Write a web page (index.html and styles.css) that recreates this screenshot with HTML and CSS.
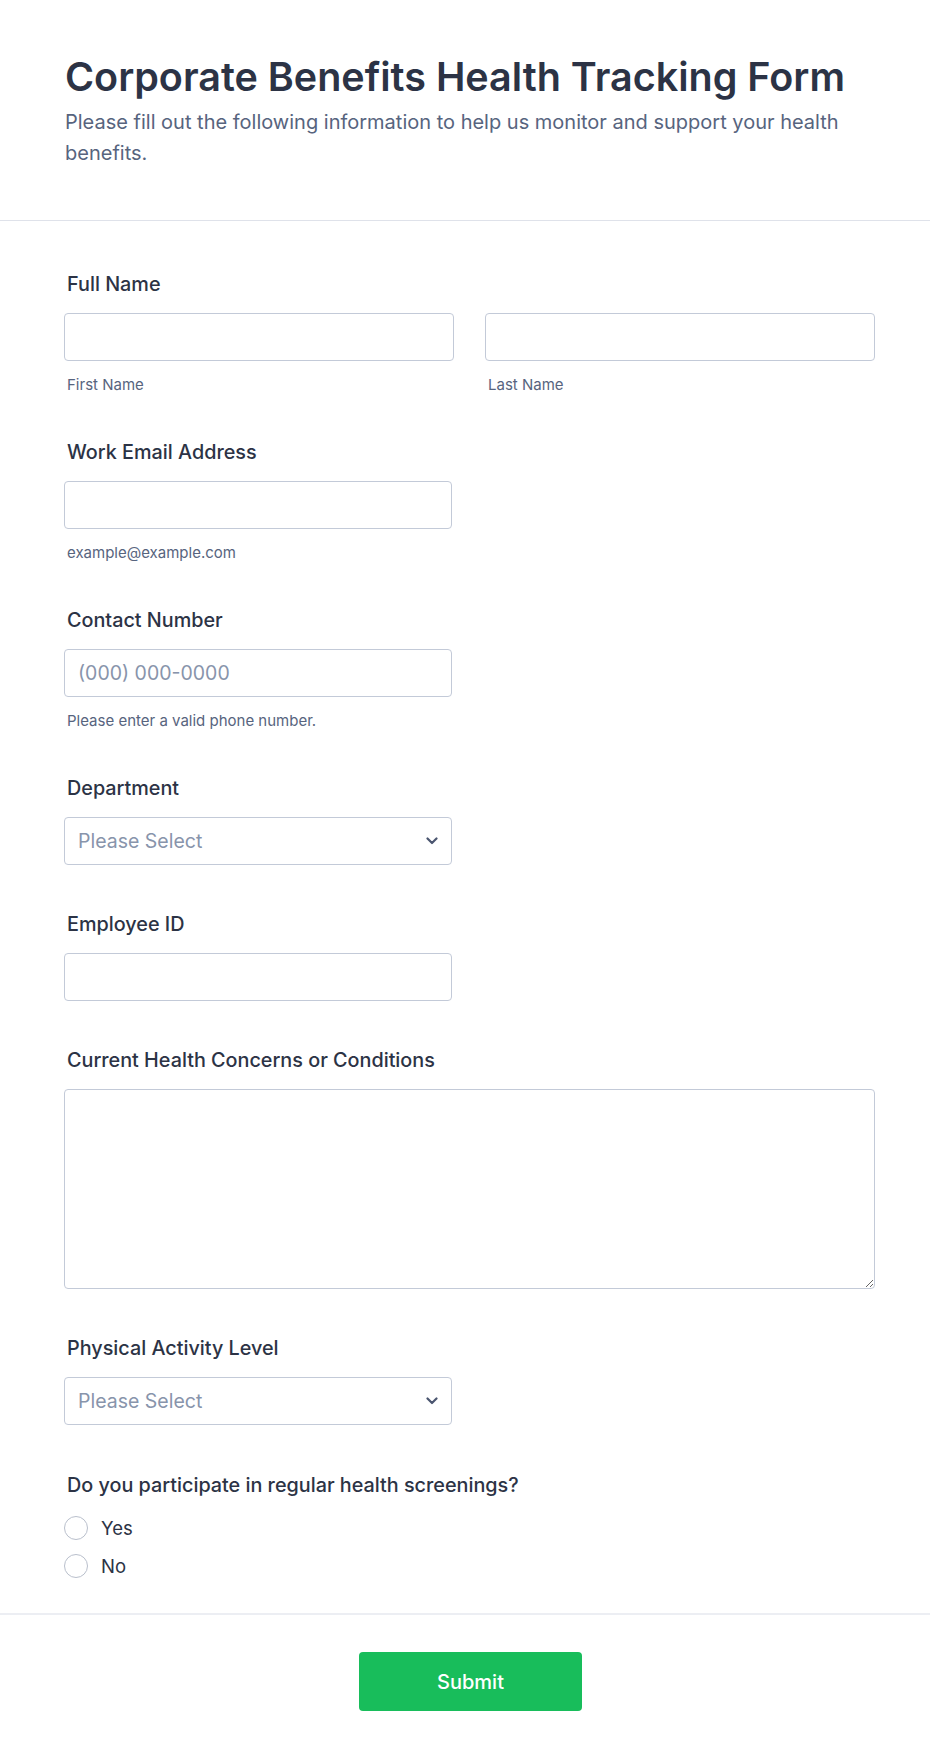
FILE: index.html
```html
<!DOCTYPE html>
<html lang="en">
<head>
<meta charset="utf-8">
<title>Corporate Benefits Health Tracking Form</title>
<link rel="stylesheet" href="styles.css">
</head>
<body>
<form class="form">
  <header class="form-header">
    <h1 class="form-title">Corporate Benefits Health Tracking Form</h1>
    <p class="form-subtitle">Please fill out the following information to help us monitor and support your health benefits.</p>
  </header>

  <div class="form-body">
    <div class="field">
      <label class="field-label">Full Name</label>
      <div class="name-row">
        <div class="name-col">
          <input class="input" type="text">
          <span class="sublabel">First Name</span>
        </div>
        <div class="name-col">
          <input class="input" type="text">
          <span class="sublabel">Last Name</span>
        </div>
      </div>
    </div>

    <div class="field">
      <label class="field-label">Work Email Address</label>
      <input class="input input-half" type="email">
      <span class="sublabel">example@example.com</span>
    </div>

    <div class="field">
      <label class="field-label">Contact Number</label>
      <input class="input input-half" type="tel" placeholder="(000) 000-0000">
      <span class="sublabel">Please enter a valid phone number.</span>
    </div>

    <div class="field">
      <label class="field-label">Department</label>
      <div class="select-wrap">
        <select class="input select">
          <option>Please Select</option>
        </select>
        <svg class="chevron" width="12" height="8" viewBox="0 0 12 8"><path d="M1.5 1.5 L6 6 L10.5 1.5" fill="none" stroke="#4b5670" stroke-width="2.2" stroke-linecap="round" stroke-linejoin="round"/></svg>
      </div>
    </div>

    <div class="field">
      <label class="field-label">Employee ID</label>
      <input class="input input-half" type="text">
    </div>

    <div class="field">
      <label class="field-label">Current Health Concerns or Conditions</label>
      <textarea class="input textarea"></textarea>
    </div>

    <div class="field">
      <label class="field-label">Physical Activity Level</label>
      <div class="select-wrap">
        <select class="input select">
          <option>Please Select</option>
        </select>
        <svg class="chevron" width="12" height="8" viewBox="0 0 12 8"><path d="M1.5 1.5 L6 6 L10.5 1.5" fill="none" stroke="#4b5670" stroke-width="2.2" stroke-linecap="round" stroke-linejoin="round"/></svg>
      </div>
    </div>

    <div class="field field-last">
      <label class="field-label">Do you participate in regular health screenings?</label>
      <div class="radio-list">
        <label class="radio-row"><input class="radio" type="radio" name="screen"><span>Yes</span></label>
        <label class="radio-row"><input class="radio" type="radio" name="screen"><span>No</span></label>
      </div>
    </div>
  </div>

  <footer class="form-footer">
    <button class="submit" type="button">Submit</button>
  </footer>
</form>
</body>
</html>
```

FILE: styles.css
```css
* {
  box-sizing: border-box;
}

body {
  margin: 0;
  background: #ffffff;
  font-family: Inter, "Noto Sans", sans-serif;
  color: #2c3345;
}

.form-header {
  padding: 53px 55px 51px 65px;
  border-bottom: 1px solid #dfe2ea;
}

.form-title {
  margin: 0;
  font-size: 39.5px;
  line-height: 48px;
  font-weight: 600;
  color: #2c3345;
}

.form-subtitle {
  margin: 6px 0 0;
  font-size: 20px;
  line-height: 31px;
  color: #57647e;
}

.form-body {
  padding: 52px 55px 0 64px;
}

.field {
  display: flex;
  flex-direction: column;
  align-items: flex-start;
  margin-bottom: 48px;
}

.field-last {
  padding-top: 1px;
  margin-bottom: 35px;
}

.field-label {
  display: block;
  font-size: 19.8px;
  line-height: 22px;
  font-weight: 500;
  color: #2c3345;
  margin: 0 0 18px 3px;
}

.name-row {
  display: grid;
  grid-template-columns: 1fr 1fr;
  column-gap: 31px;
  width: 100%;
}

.name-col {
  display: flex;
  flex-direction: column;
}

.input {
  display: block;
  width: 100%;
  height: 48px;
  border: 1px solid #c3cad8;
  border-radius: 4px;
  background: #ffffff;
  padding: 0 13px;
  font-family: Inter, "Noto Sans", sans-serif;
  font-size: 19.5px;
  color: #2c3345;
  outline: none;
}

.input::placeholder {
  color: #8894ab;
}

.input-half {
  width: 388px;
}

.sublabel {
  display: block;
  margin: 15px 0 0 3px;
  font-size: 15px;
  line-height: 17px;
  color: #57647e;
}

.select-wrap {
  position: relative;
  width: 388px;
}

.select {
  appearance: none;
  -webkit-appearance: none;
  color: #8894ab;
}

.chevron {
  position: absolute;
  right: 14px;
  top: 20px;
  pointer-events: none;
}

.textarea {
  height: 200px;
  resize: both;
  padding: 12px 13px;
}

.radio-list {
  display: flex;
  flex-direction: column;
  gap: 14px;
  margin-top: 2px;
}

.radio-row {
  display: flex;
  align-items: center;
  gap: 13px;
  height: 24px;
  font-size: 18.5px;
  line-height: 24px;
  color: #2c3345;
}

.radio {
  appearance: none;
  -webkit-appearance: none;
  margin: 0;
  width: 24px;
  height: 24px;
  border: 1px solid #b9bfcc;
  border-radius: 50%;
  background: #ffffff;
}

.form-footer {
  border-top: 2px solid #eceef3;
  padding: 37px 55px 50px 66px;
  display: flex;
  justify-content: center;
}

.submit {
  width: 223px;
  height: 59px;
  border: none;
  border-radius: 4px;
  background: #18bd5b;
  color: #ffffff;
  font-family: Inter, "Noto Sans", sans-serif;
  font-size: 20px;
  font-weight: 500;
  cursor: pointer;
}
```
